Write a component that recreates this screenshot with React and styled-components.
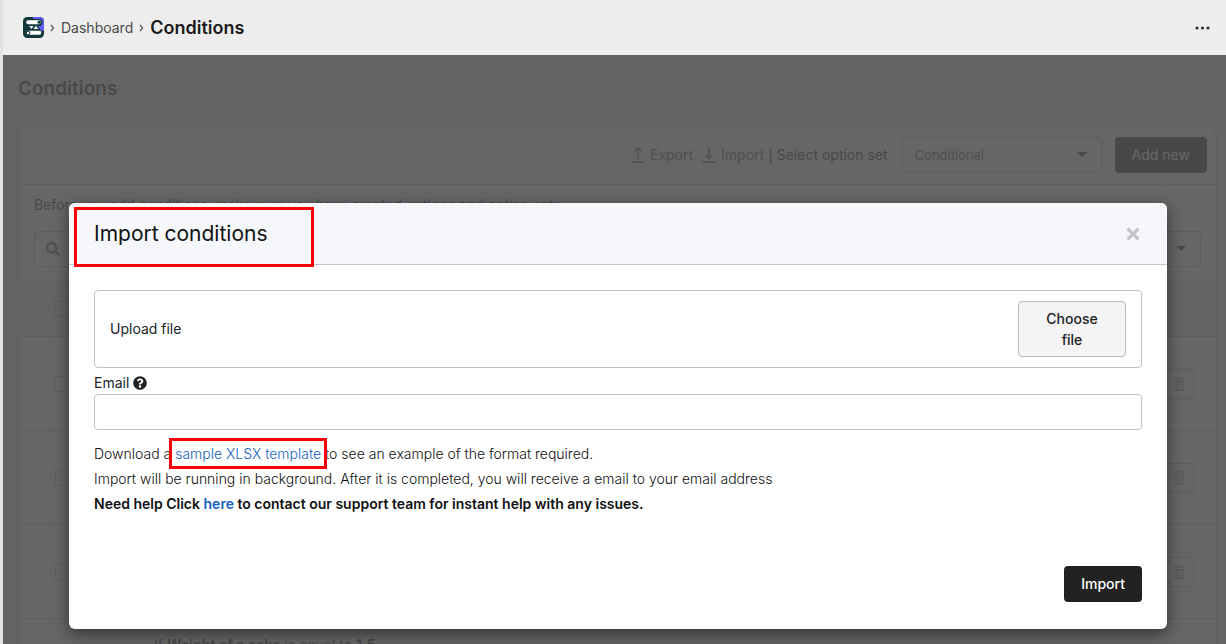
import React, { useState } from 'react'
import styled, { createGlobalStyle } from 'styled-components';
import { FaQuestionCircle, FaTimes, FaSearch } from 'react-icons/fa';

const GlobalStyle = createGlobalStyle`
    * {
        box-sizing: border-box;
    }
    body {
        margin: 0;
        font-family: Inter, "Liberation Sans", sans-serif;
        font-size: 14px;
        line-height: 20px;
        color: #202223;
    }
    button, input, select {
        font: inherit;
    }
    p, h1, h2 {
        margin: 0;
    }
`;
const Page = styled.div`
    display: flex;
    flex-direction: column;
    height: 100vh;
    overflow: hidden;
    border-left: 3px solid #e3e3e3;
    background: #646464;
`;
const TopBar = styled.header`
    display: flex;
    flex: none;
    align-items: center;
    height: 55px;
    padding: 0 15px 0 20px;
    background: #ededed;
`;
const Crumbs = styled.nav`
    display: flex;
    flex: 1;
    align-items: center;
    gap: 6px;
`;
const CrumbLink = styled.a`
    color: #4a4a4a;
    text-decoration: none;
`;
const CrumbTitle = styled.h1`
    font-size: 18px;
    font-weight: 600;
    color: #1a1a1a;
`;
const MoreButton = styled.button`
    display: flex;
    padding: 0;
    border: 0;
    background: none;
    color: #303030;
`;
const Main = styled.main`
    position: relative;
    flex: 1;
    padding: 22px 9px 0 15px;
    color: #494949;
`;
const PageTitle = styled.h2`
    font-size: 19px;
    line-height: 24px;
    font-weight: 600;
`;
const Card = styled.section`
    margin-top: 25px;
    border: 1px solid #5e5e5e;
    border-radius: 8px;
    background: #666666;
`;
const Toolbar = styled.div`
    display: flex;
    align-items: center;
    justify-content: flex-end;
    height: 58px;
    padding: 0 9px 1px;
    border-bottom: 1px solid #5e5e5e;
`;
const ToolLink = styled.a`
    display: flex;
    align-items: center;
    gap: 4px;
    margin-right: 8px;
    color: #505050;
    text-decoration: none;

    & + & {
        margin-right: 4px;
    }
`;
const SelectWrap = styled.div`
    position: relative;
    width: ${(props) => props.$width};
    margin: ${(props) => props.$margin || '0'};
`;
const Select = styled.select`
    appearance: none;
    width: 100%;
    height: 36px;
    padding: 0 12px;
    border: 1px solid #5d5d5d;
    border-radius: 4px;
    background: transparent;
    color: #505050;
    font-size: 13px;
`;
const Arrow = styled.span`
    position: absolute;
    top: 15px;
    right: 15px;
    border: 5px solid transparent;
    border-top-color: #494949;
    border-bottom: 0;
    pointer-events: none;
`;
const AddButton = styled.button`
    height: 36px;
    padding: 0 17px;
    border: 0;
    border-radius: 4px;
    background: #484848;
    color: #686868;
    font-weight: 400;
`;
const Filters = styled.div`
    padding: 10px 15px 14px;
`;
const FilterRow = styled.div`
    display: flex;
    gap: 12px;
    margin-top: 16px;
`;
const SearchBox = styled.label`
    display: flex;
    flex: 1;
    align-items: center;
    gap: 7px;
    height: 36px;
    padding: 0 11px;
    border: 1px solid #5d5d5d;
    border-radius: 4px;
    color: #505050;
`;
const SearchInput = styled.input`
    flex: 1;
    border: 0;
    outline: 0;
    background: transparent;

    &::placeholder {
        color: #585858;
    }
`;
const Table = styled.table`
    width: 100%;
    border-collapse: collapse;
    text-align: left;
`;
const HeadRow = styled.tr`
    height: 55px;
    background: #626564;
    border-top: 1px solid #5c5f5e;
    border-bottom: 1px solid #5c5f5e;
`;
const Row = styled.tr`
    height: 94px;
    border-bottom: 1px solid #5e5e5e;
`;
const Cell = styled.td`
    width: ${(props) => props.$width || 'auto'};
    padding: ${(props) => props.$padding || '0'};
    vertical-align: ${(props) => props.$align || 'middle'};
`;
const Check = styled.input`
    appearance: none;
    display: block;
    width: 16px;
    height: 16px;
    margin: 0;
    border: 1px solid #5d5d5d;
    border-radius: 3px;
`;
const DeleteButton = styled.button`
    display: flex;
    align-items: center;
    justify-content: center;
    width: 30px;
    height: 30px;
    padding: 0;
    border: 1px solid #5d5d5d;
    border-radius: 3px;
    background: transparent;
    color: #585858;
`;
const Overlay = styled.div`
    position: absolute;
    inset: 0;
    padding: 148px 59px 0 66px;
`;
const Modal = styled.div`
    position: relative;
    border-radius: 6px;
    background: #fff;
    box-shadow: 0 5px 15px rgba(0, 0, 0, 0.5);
    color: #202223;
`;
const ModalHeader = styled.div`
    display: flex;
    align-items: center;
    justify-content: space-between;
    height: 62px;
    padding: 0 25px;
    border-bottom: 1px solid #c4c7cb;
    border-radius: 6px 6px 0 0;
    background: #f5f7fb;
`;
const ModalTitle = styled.h2`
    font-size: 21px;
    line-height: 30px;
    font-weight: 400;
    color: #111213;
`;
const CloseButton = styled.button`
    display: flex;
    padding: 0;
    border: 0;
    background: none;
    color: #c4c4c6;
`;
const ModalBody = styled.div`
    padding: 25px 25px 22px;
    border-radius: 6px;
`;
const UploadBox = styled.div`
    display: flex;
    align-items: center;
    justify-content: space-between;
    height: 78px;
    padding: 0 15px;
    border: 1px solid #bfc3c7;
    border-radius: 4px;
`;
const ChooseButton = styled.button`
    width: 108px;
    height: 56px;
    padding: 0 20px;
    border: 1px solid #b5bac0;
    border-radius: 4px;
    background: #f4f4f4;
    color: #202223;
    font-weight: 500;
    line-height: 21px;
`;
const EmailLabel = styled.label`
    display: flex;
    align-items: center;
    gap: 4px;
    margin: 5px 0 1px;
`;
const EmailInput = styled.input`
    display: block;
    width: 100%;
    height: 36px;
    padding: 0 12px;
    border: 1px solid #bfc3c7;
    border-radius: 4px;
`;
const Notes = styled.div`
    margin-top: 11px;
    line-height: 25px;
`;
const Note = styled.p`
    color: #101112;
    font-weight: ${(props) => (props.$bold ? 600 : 300)};
`;
const NoteLink = styled.a`
    position: relative;
    color: #1362bf;
    text-decoration: none;
`;
const Highlight = styled.span`
    position: absolute;
    inset: ${(props) => props.$inset};
    width: ${(props) => props.$width || 'auto'};
    height: ${(props) => props.$height || 'auto'};
    border: 3px solid #fb0007;
    pointer-events: none;
`;
const ModalFooter = styled.div`
    display: flex;
    justify-content: flex-end;
    padding: 28px 25px 27px;
`;
const ImportButton = styled.button`
    height: 36px;
    padding: 0 17px;
    border: 0;
    border-radius: 4px;
    background: #222222;
    color: #fff;
    font-weight: 500;
`;

function Logo() {
    return (
        <svg width="21" height="21" viewBox="0 0 20 20">
            <rect width="20" height="20" rx="4" fill="#12383b" />
            <path d="M9 0h7a4 4 0 0 1 4 4v9h-3z" fill="#625bf6" />
            <rect x="1.500" y="2" width="17" height="6.500" rx="3.200" fill="#12383b" />
            <rect x="3" y="3" width="14" height="4" rx="2" fill="#fff" />
            <circle cx="15.300" cy="5" r="1.500" fill="#12383b" />
            <path d="M6 8.500h4L8 11.500zM10 11.500h4.500L12.300 8.300z" fill="#fff" />
            <rect x="3" y="13" width="14.500" height="4" rx="2" fill="#fff" />
            <circle cx="4.800" cy="15.200" r="1.700" fill="#fff" stroke="#12383b" />
        </svg>
    )
}

function Chevron() {
    return (
        <svg width="5" height="8" viewBox="0 0 5 8" fill="none" stroke="#555" strokeWidth="1.2">
            <path d="M1 1l2.600 3L1 7" />
        </svg>
    )
}

function TransferIcon({ up }) {
    return (
        <svg width="16" height="18" viewBox="0 0 16 18" fill="none" stroke="currentColor" strokeWidth="1.6">
            <path d={up ? 'M8 13V2M4.500 5L8 1.800 11.500 5' : 'M8 1v11M4.500 9L8 12.500 11.500 9'} />
            <path d="M1 16h14" />
        </svg>
    )
}

function TrashIcon() {
    return (
        <svg width="14" height="16" viewBox="0 0 14 16" fill="none" stroke="currentColor">
            <path d="M1 3.500h12M4.500 3.500V1.500h5v2M2.500 5.500h9v9h-9zM5 6v8M7 6v8M9 6v8" />
        </svg>
    )
}

function ImportModal() {
    const [email, setEmail] = useState("")
    return (
        <Overlay>
            <Modal role="dialog" aria-labelledby="import-title">
                <ModalHeader>
                    <ModalTitle id="import-title">Import conditions</ModalTitle>
                    <CloseButton aria-label="Close"><FaTimes size={18} /></CloseButton>
                </ModalHeader>
                <Highlight $inset="4px auto auto 5px" $width="240px" $height="60px" />
                <ModalBody>
                    <UploadBox>
                        <span>Upload file</span>
                        <ChooseButton>Choose file</ChooseButton>
                    </UploadBox>
                    <EmailLabel htmlFor="email">Email <FaQuestionCircle size={14} /></EmailLabel>
                    <EmailInput id="email" type="email" value={email} onChange={(e) => setEmail(e.target.value)} />
                    <Notes>
                        <Note>
                            Download a <NoteLink href="#template">sample XLSX template<Highlight $inset="-7px -6px" /></NoteLink> to see an example of the format required.
                        </Note>
                        <Note>Import will be running in background. After it is completed, you will receive a email to your email address</Note>
                        <Note $bold>
                            Need help Click <NoteLink href="#support">here</NoteLink> to contact our support team for instant help with any issues.
                        </Note>
                    </Notes>
                </ModalBody>
                <ModalFooter>
                    <ImportButton>Import</ImportButton>
                </ModalFooter>
            </Modal>
        </Overlay>
    )
}

function App() {
    const rows = [1, 2, 3]
    return (
        <Page>
            <GlobalStyle />
            <TopBar>
                <Crumbs>
                    <Logo />
                    <Chevron />
                    <CrumbLink href="#dashboard">Dashboard</CrumbLink>
                    <Chevron />
                    <CrumbTitle>Conditions</CrumbTitle>
                </Crumbs>
                <MoreButton aria-label="More">
                    <svg width="18" height="6" viewBox="0 0 18 6" fill="currentColor">
                        <circle cx="4" cy="3" r="1.600" />
                        <circle cx="9.500" cy="3" r="1.600" />
                        <circle cx="15" cy="3" r="1.600" />
                    </svg>
                </MoreButton>
            </TopBar>
            <Main>
                <PageTitle>Conditions</PageTitle>
                <Card>
                    <Toolbar>
                        <ToolLink href="#export"><TransferIcon up />Export</ToolLink>
                        <ToolLink href="#import"><TransferIcon />Import</ToolLink>
                        <label htmlFor="option-set">| Select option set</label>
                        <SelectWrap $width="200px" $margin="0 13px 0 14px">
                            <Select id="option-set"><option>Conditional</option></Select>
                            <Arrow />
                        </SelectWrap>
                        <AddButton>Add new</AddButton>
                    </Toolbar>
                    <Filters>
                        <p>Before you add conditions, make sure you have created options and option sets</p>
                        <FilterRow>
                            <SearchBox>
                                <FaSearch size={14} />
                                <SearchInput placeholder="Search" aria-label="Search" />
                            </SearchBox>
                            <SelectWrap $width="120px">
                                <Select aria-label="Filter" />
                                <Arrow />
                            </SelectWrap>
                        </FilterRow>
                    </Filters>
                    <Table>
                        <thead>
                            <HeadRow>
                                <Cell as="th" $width="135px" $padding="0 0 0 36px"><Check type="checkbox" aria-label="Select all" /></Cell>
                                <Cell as="th" />
                                <Cell as="th" $width="52px" />
                            </HeadRow>
                        </thead>
                        <tbody>
                            {rows.map((row) => (
                                <Row key={row}>
                                    <Cell $padding="0 0 0 36px"><Check type="checkbox" aria-label="Select row" /></Cell>
                                    <Cell />
                                    <Cell><DeleteButton aria-label="Delete"><TrashIcon /></DeleteButton></Cell>
                                </Row>
                            ))}
                            <Row>
                                <Cell />
                                <Cell $padding="16px 0 0" $align="top">If <b>Weight of a cake</b> is equal to <b>1.5</b></Cell>
                                <Cell />
                            </Row>
                        </tbody>
                    </Table>
                </Card>
                <ImportModal />
            </Main>
        </Page>
    )
}

export default App
